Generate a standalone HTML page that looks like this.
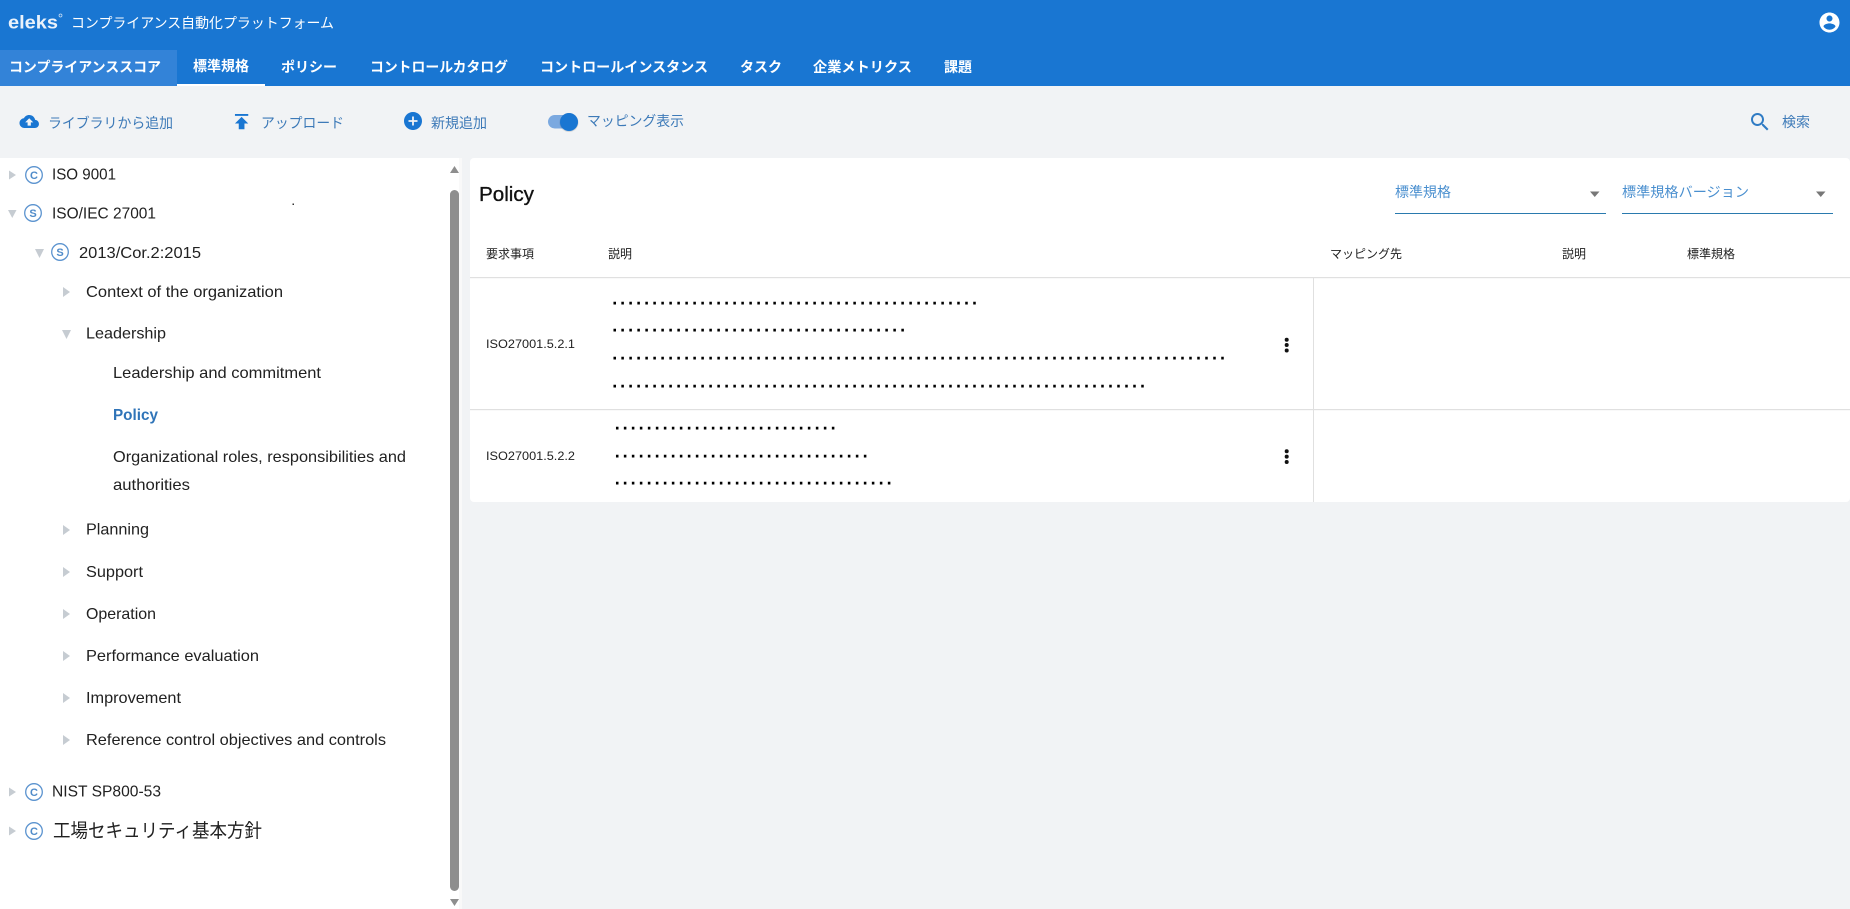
<!DOCTYPE html>
<html lang="ja"><head><meta charset="utf-8"><title>コンプライアンス自動化プラットフォーム</title>
<style>
html,body{margin:0;padding:0;background:#f1f3f5;width:1850px;height:909px;overflow:hidden}
svg{display:block;position:absolute;left:0;top:0}
text{font-family:"Liberation Sans","Noto Sans CJK JP",sans-serif;white-space:pre}
.t{font-size:14px;fill:#3d7ab8}
.tab{font-size:14px;font-weight:700;fill:#fff}
.n{font-size:16px;fill:#212121}
.h{font-size:12px;fill:#212121}
.d{font-size:18px;font-weight:700;fill:#000;letter-spacing:2.996px}
.f{font-size:14px;fill:#4a8fcf}
.ic{font-size:11px;font-weight:700;fill:#4f8bc9;text-anchor:middle}
</style></head><body>
<svg width="1850" height="909" viewBox="0 0 1850 909" xmlns="http://www.w3.org/2000/svg">
<!-- backgrounds -->
<rect width="1850" height="909" fill="#f1f3f5"/>
<rect width="1850" height="86" fill="#1976d2"/>
<rect x="0" y="50" width="177" height="36" fill="#3383d8"/>
<rect x="177" y="84" width="88" height="2" fill="#fff"/>
<rect x="0" y="158" width="462" height="751" fill="#fff"/>
<rect x="470" y="158" width="1380" height="344" rx="4" fill="#fff"/>

<!-- header -->
<text x="8" y="28.500" font-size="18" font-weight="700" fill="#eaf2fb" textLength="50" lengthAdjust="spacingAndGlyphs">eleks</text>
<circle cx="60.500" cy="15.500" r="1.500" fill="none" stroke="#cfe2f6" stroke-width=".7"/>
<text x="71" y="28" font-size="14" fill="#fff" textLength="263" lengthAdjust="spacingAndGlyphs">コンプライアンス自動化プラットフォーム</text>
<path transform="translate(1817.500 10.500)" fill="#fff" d="M12 2C6.48 2 2 6.48 2 12s4.48 10 10 10 10-4.48 10-10S17.52 2 12 2zm0 3c1.66 0 3 1.34 3 3s-1.34 3-3 3-3-1.34-3-3 1.34-3 3-3zm0 14.2c-2.5 0-4.71-1.28-6-3.22.03-1.99 4-3.08 6-3.08 1.99 0 5.97 1.09 6 3.08-1.29 1.94-3.5 3.22-6 3.22z"/>

<!-- tabs -->
<text class="tab" x="9" y="72" textLength="152" lengthAdjust="spacingAndGlyphs">コンプライアンススコア</text>
<text class="tab" x="193" y="71" textLength="56">標準規格</text>
<text class="tab" x="281" y="72" textLength="56">ポリシー</text>
<text class="tab" x="370" y="72" textLength="138" lengthAdjust="spacingAndGlyphs">コントロールカタログ</text>
<text class="tab" x="540" y="72" textLength="168" lengthAdjust="spacingAndGlyphs">コントロールインスタンス</text>
<text class="tab" x="740" y="72" textLength="42">タスク</text>
<text class="tab" x="813" y="72" textLength="99" lengthAdjust="spacingAndGlyphs">企業メトリクス</text>
<text class="tab" x="944" y="72" textLength="28">課題</text>

<!-- toolbar -->
<path transform="translate(19.500 111.800) scale(.81)" fill="#1976d2" d="M19.35 10.04C18.67 6.59 15.64 4 12 4 9.11 4 6.6 5.64 5.35 8.04 2.34 8.36 0 10.91 0 14c0 3.31 2.69 6 6 6h13c2.76 0 5-2.24 5-5 0-2.64-2.05-4.78-4.65-4.96zM14 13v4h-4v-4H7l5-5 5 5h-3z"/>
<text class="t" x="48" y="128" textLength="125" lengthAdjust="spacingAndGlyphs">ライブラリから追加</text>
<path transform="translate(230.200 110.200) scale(.95)" fill="#1976d2" d="M5 4v2h14V4H5zm0 10h4v6h6v-6h4l-7-7-7 7z"/>
<text class="t" x="261" y="128" textLength="83" lengthAdjust="spacingAndGlyphs">アップロード</text>
<path transform="translate(402.200 110.200) scale(.9)" fill="#1976d2" d="M12 2C6.48 2 2 6.48 2 12s4.48 10 10 10 10-4.48 10-10S17.52 2 12 2zm5 11h-4v4h-2v-4H7v-2h4V7h2v4h4v2z"/>
<text class="t" x="431" y="128" textLength="56">新規追加</text>
<rect x="548" y="115" width="30" height="13.500" rx="6.750" fill="#7ba9e0"/>
<circle cx="569" cy="122.500" r="9.500" fill="#000" opacity=".12"/>
<circle cx="569" cy="122" r="9" fill="#1976d2"/>
<text class="t" x="587" y="126" textLength="97" lengthAdjust="spacingAndGlyphs">マッピング表示</text>
<path transform="translate(1748 110)" fill="#2f7bc4" d="M15.5 14h-.79l-.28-.27C15.41 12.59 16 11.11 16 9.5 16 5.91 13.09 3 9.5 3S3 5.91 3 9.5 5.91 16 9.5 16c1.61 0 3.09-.59 4.23-1.57l.27.28v.79l5 4.99L20.49 19l-4.99-5zm-6 0C7.01 14 5 11.99 5 9.5S7.01 5 9.5 5 14 7.01 14 9.5 11.99 14 9.5 14z"/>
<text class="t" x="1782" y="127" textLength="28">検索</text>

<!-- tree arrows -->
<g fill="#c6ccd2">
<path d="M9 170.500l7 4.500-7 4.500z"/>
<path d="M8 210h8.500l-4.250 8z"/>
<path d="M35 249h9l-4.500 9z"/>
<path d="M63 287l7 5-7 5z"/>
<path d="M62 330h9l-4.500 9z"/>
<path d="M63 525l7 5-7 5z"/>
<path d="M63 567l7 5-7 5z"/>
<path d="M63 609l7 5-7 5z"/>
<path d="M63 651l7 5-7 5z"/>
<path d="M63 693l7 5-7 5z"/>
<path d="M63 735l7 5-7 5z"/>
<path d="M9 787.500l7 4.500-7 4.500z"/>
<path d="M9 826.500l7 4.500-7 4.500z"/>
</g>

<!-- tree icons -->
<g fill="none" stroke="#5b93cf" stroke-width="1.300">
<circle cx="34" cy="175" r="8.300"/>
<circle cx="33" cy="213" r="8.300"/>
<circle cx="60" cy="252" r="8.300"/>
<circle cx="34" cy="792" r="8.300"/>
<circle cx="34" cy="831" r="8.300"/>
</g>
<text class="ic" x="34" y="179">C</text>
<text class="ic" x="33" y="217">S</text>
<text class="ic" x="60" y="256">S</text>
<text class="ic" x="34" y="796">C</text>
<text class="ic" x="34" y="835">C</text>

<!-- tree text -->
<text class="n" x="52" y="179.500" textLength="64" lengthAdjust="spacingAndGlyphs">ISO 9001</text>
<text class="n" x="52" y="218.500" textLength="104" lengthAdjust="spacingAndGlyphs">ISO/IEC 27001</text>
<text class="n" x="79" y="258" textLength="122" lengthAdjust="spacingAndGlyphs">2013/Cor.2:2015</text>
<text class="n" x="86" y="297" textLength="197" lengthAdjust="spacingAndGlyphs">Context of the organization</text>
<text class="n" x="86" y="338.500" textLength="80" lengthAdjust="spacingAndGlyphs">Leadership</text>
<text class="n" x="113" y="378" textLength="208" lengthAdjust="spacingAndGlyphs">Leadership and commitment</text>
<text class="n" x="113" y="420" style="fill:#2f74b8;font-weight:700" textLength="45" lengthAdjust="spacingAndGlyphs">Policy</text>
<text class="n" x="113" y="462" textLength="293" lengthAdjust="spacingAndGlyphs">Organizational roles, responsibilities and</text>
<text class="n" x="113" y="490" textLength="77" lengthAdjust="spacingAndGlyphs">authorities</text>
<text class="n" x="86" y="534.500" textLength="63" lengthAdjust="spacingAndGlyphs">Planning</text>
<text class="n" x="86" y="577" textLength="57" lengthAdjust="spacingAndGlyphs">Support</text>
<text class="n" x="86" y="619" textLength="70" lengthAdjust="spacingAndGlyphs">Operation</text>
<text class="n" x="86" y="661" textLength="173" lengthAdjust="spacingAndGlyphs">Performance evaluation</text>
<text class="n" x="86" y="703" textLength="95" lengthAdjust="spacingAndGlyphs">Improvement</text>
<text class="n" x="86" y="745" textLength="300" lengthAdjust="spacingAndGlyphs">Reference control objectives and controls</text>
<text class="n" x="52" y="796.500" textLength="109" lengthAdjust="spacingAndGlyphs">NIST SP800-53</text>
<text x="53" y="837" font-size="19" fill="#212121" textLength="209" lengthAdjust="spacingAndGlyphs">工場セキュリティ基本方針</text>
<rect x="292.500" y="203.500" width="1.500" height="1.500" fill="#333"/>

<!-- scrollbar -->
<rect x="459" y="158" width="3" height="751" fill="#f9f9f9"/>
<path d="M450 173l4.500-7 4.500 7z" fill="#8e8e8e"/>
<rect x="450" y="190" width="9" height="701" rx="4.500" fill="#8e8e8e"/>
<path d="M450 899h9l-4.500 7z" fill="#8e8e8e"/>

<!-- policy panel -->
<text x="479" y="201" font-size="20" fill="#111" stroke="#111" stroke-width=".35" textLength="55" lengthAdjust="spacingAndGlyphs">Policy</text>
<text class="f" x="1395" y="197" textLength="56">標準規格</text>
<path d="M1590 191.500h9.500l-4.750 5.500z" fill="#777"/>
<rect x="1395" y="213" width="211" height="1" fill="#2a7aae"/>
<text class="f" x="1622" y="197" textLength="127" lengthAdjust="spacingAndGlyphs">標準規格バージョン</text>
<path d="M1816 191.500h9.500l-4.750 5.500z" fill="#777"/>
<rect x="1622" y="213" width="211" height="1" fill="#2a7aae"/>

<!-- table -->
<text class="h" x="486" y="258" textLength="48">要求事項</text>
<text class="h" x="608" y="258" textLength="24">説明</text>
<text class="h" x="1330" y="258" textLength="72" lengthAdjust="spacingAndGlyphs">マッピング先</text>
<text class="h" x="1562" y="258" textLength="24">説明</text>
<text class="h" x="1687" y="258" textLength="48">標準規格</text>
<rect x="470" y="277" width="1380" height="1.200" fill="#e0e0e0"/>
<rect x="470" y="409" width="1380" height="1.200" fill="#e0e0e0"/>
<rect x="1313" y="278" width="1" height="224" fill="#e0e0e0"/>

<text class="h" x="486" y="348" textLength="89" lengthAdjust="spacingAndGlyphs">ISO27001.5.2.1</text>
<text class="h" x="486" y="460" textLength="89" lengthAdjust="spacingAndGlyphs">ISO27001.5.2.2</text>

<text class="d" x="612.200" y="304.300">..............................................</text>
<text class="d" x="612.200" y="331.300">.....................................</text>
<text class="d" x="612.200" y="359.500">.............................................................................</text>
<text class="d" x="612.200" y="387.300">...................................................................</text>
<text class="d" x="614.700" y="429.500">............................</text>
<text class="d" x="614.700" y="457.500">................................</text>
<text class="d" x="614.700" y="484.500">...................................</text>

<g fill="#111">
<circle cx="1286.700" cy="339.700" r="2"/><circle cx="1286.700" cy="345" r="2"/><circle cx="1286.700" cy="350.500" r="2"/>
<circle cx="1286.700" cy="451.300" r="2"/><circle cx="1286.700" cy="456.600" r="2"/><circle cx="1286.700" cy="462" r="2"/>
</g>
</svg>
</body></html>
